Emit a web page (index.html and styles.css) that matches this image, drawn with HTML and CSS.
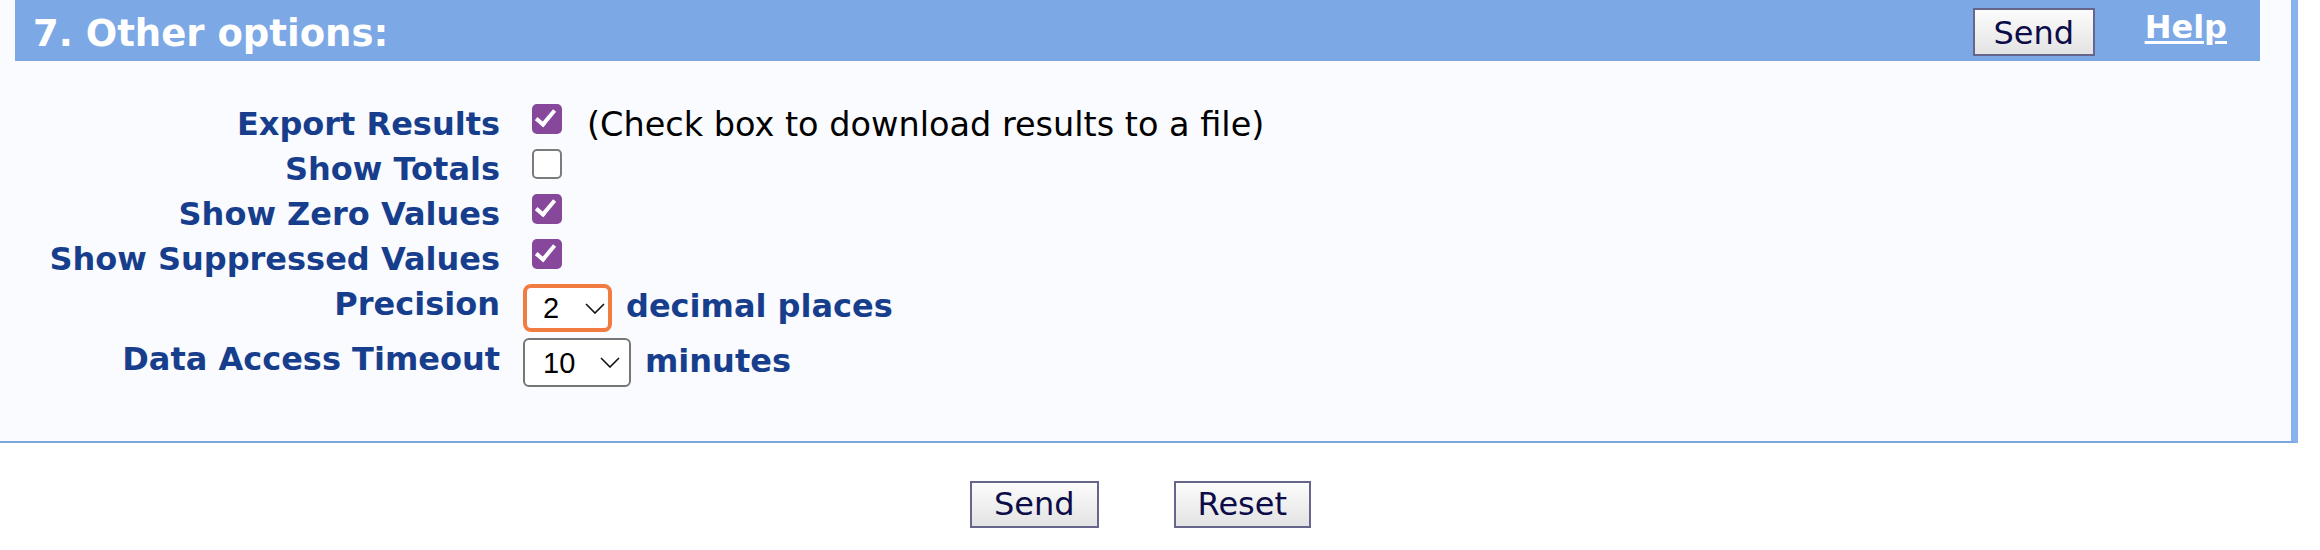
FILE: index.html
```html
<!DOCTYPE html>
<html>
<head>
<meta charset="utf-8">
<link rel="stylesheet" href="styles.css">
</head>
<body>
<div class="panel">
  <div class="hdr">
    <div class="title">7. Other options:</div>
    <button class="btn hbtn" type="button">Send</button>
    <a class="help" href="#">Help</a>
  </div>
  <div class="form">
    <div class="row">
      <div class="label">Export Results</div>
      <div class="ctrl"><input class="cb" type="checkbox" checked><span class="note">(Check box to download results to a file)</span></div>
    </div>
    <div class="row">
      <div class="label">Show Totals</div>
      <div class="ctrl"><input class="cb" type="checkbox"></div>
    </div>
    <div class="row">
      <div class="label">Show Zero Values</div>
      <div class="ctrl"><input class="cb" type="checkbox" checked></div>
    </div>
    <div class="row">
      <div class="label">Show Suppressed Values</div>
      <div class="ctrl"><input class="cb" type="checkbox" checked></div>
    </div>
    <div class="row row-sel">
      <div class="label">Precision</div>
      <div class="ctrl">
        <span class="selwrap sel-prec focus">
          <select class="sel"><option>0</option><option>1</option><option selected>2</option><option>3</option></select>
          <svg class="chev" width="20" height="11" viewBox="0 0 20 11"><polyline points="1,1 10,10 19,1" fill="none" stroke="#111" stroke-width="1.6"/></svg>
        </span>
        <span class="unit">decimal places</span>
      </div>
    </div>
    <div class="row row-sel2">
      <div class="label">Data Access Timeout</div>
      <div class="ctrl">
        <span class="selwrap sel-time">
          <select class="sel"><option>5</option><option selected>10</option><option>20</option></select>
          <svg class="chev" width="20" height="11" viewBox="0 0 20 11"><polyline points="1,1 10,10 19,1" fill="none" stroke="#111" stroke-width="1.6"/></svg>
        </span>
        <span class="unit">minutes</span>
      </div>
    </div>
  </div>
</div>
<div class="actions">
  <button class="btn" type="button">Send</button>
  <button class="btn" type="reset">Reset</button>
</div>
</body>
</html>
```
FILE: styles.css
```css
html, body {
  margin: 0;
  padding: 0;
  background: #ffffff;
}
body {
  font-family: "DejaVu Sans", Verdana, sans-serif;
}
.panel {
  width: 2291px;
  height: 441px;
  background: #f9fbff;
  border-right: 7px solid #89b1ef;
  border-bottom: 2px solid #7aa6e2;
}
.hdr {
  margin-left: 15px;
  width: 2245px;
  height: 61px;
  box-sizing: border-box;
  padding: 0 33px 0 18px;
  background: #7ca8e5;
  display: flex;
  align-items: flex-start;
}
.title {
  flex: 1;
  margin-top: 12px;
  font-size: 37px;
  font-weight: bold;
  color: #ffffff;
  line-height: normal;
  white-space: nowrap;
}
.btn {
  font-family: "DejaVu Sans", Verdana, sans-serif;
  font-size: 32px;
  line-height: 37px;
  color: #0c0c48;
  background: linear-gradient(#fcfcfc, #e3e3e3);
  border: 2px solid #66668c;
  border-radius: 0;
  padding: 3px 22px;
  margin: 0;
}
.hbtn {
  margin-top: 8px;
  margin-right: 50px;
  padding: 5px 18.5px 2px;
}
.help {
  margin-top: 8px;
  font-size: 32px;
  font-weight: bold;
  color: #ffffff;
  line-height: normal;
  text-decoration: underline;
  text-underline-offset: 3px;
  text-decoration-thickness: 3px;
}
.form {
  padding-top: 40.5px;
}
.row {
  display: flex;
  height: 45px;
}
.row-sel {
  height: 55px;
}
.label {
  width: 500px;
  flex: none;
  text-align: right;
  font-size: 32px;
  font-weight: bold;
  line-height: 45px;
  color: #173e8c;
  white-space: nowrap;
}
.ctrl {
  margin-left: 23px;
  display: flex;
  align-items: flex-start;
}
.cb {
  -webkit-appearance: none;
  appearance: none;
  width: 30px;
  height: 30px;
  margin: 2.5px 0 0 9px;
  border-radius: 5px;
  background: #ffffff;
  border: 2px solid #7b7b7b;
  box-sizing: border-box;
  position: relative;
  flex: none;
}
.cb:checked {
  background: #87479a;
  border: none;
}
.cb:checked::after {
  content: "";
  position: absolute;
  left: 8px;
  top: 2px;
  width: 7px;
  height: 16px;
  border: solid #ffffff;
  border-width: 0 4px 4px 0;
  transform: rotate(40deg);
}
.note {
  margin-left: 25px;
  font-size: 33.5px;
  line-height: 45px;
  color: #000000;
  white-space: nowrap;
}
.selwrap {
  position: relative;
  display: inline-block;
  flex: none;
}
.sel-prec {
  margin-top: 2.5px;
}
.sel-time {
  margin-top: 1.5px;
}
.sel {
  -webkit-appearance: none;
  appearance: none;
  display: block;
  font-family: "Liberation Sans", Arial, sans-serif;
  font-size: 29px;
  color: #000000;
  background: #ffffff;
  box-sizing: border-box;
  margin: 0;
  outline: none;
}
.sel-prec .sel {
  width: 89px;
  height: 48px;
  border: 4px solid #f07c41;
  border-radius: 8px;
  padding: 0 0 0 16px;
}
.sel-time .sel {
  width: 108px;
  height: 49px;
  border: 2px solid #767676;
  border-radius: 6px;
  padding: 0 0 0 18px;
}
.chev {
  position: absolute;
  top: 19px;
  pointer-events: none;
}
.sel-prec .chev {
  right: 7px;
}
.sel-time .chev {
  right: 11px;
}
.unit {
  margin-left: 14px;
  margin-top: 2px;
  font-size: 32px;
  font-weight: bold;
  line-height: 45px;
  color: #173e8c;
  white-space: nowrap;
}
.actions {
  width: 2281px;
  margin-top: 38px;
  display: flex;
  justify-content: center;
  gap: 75px;
}
```
